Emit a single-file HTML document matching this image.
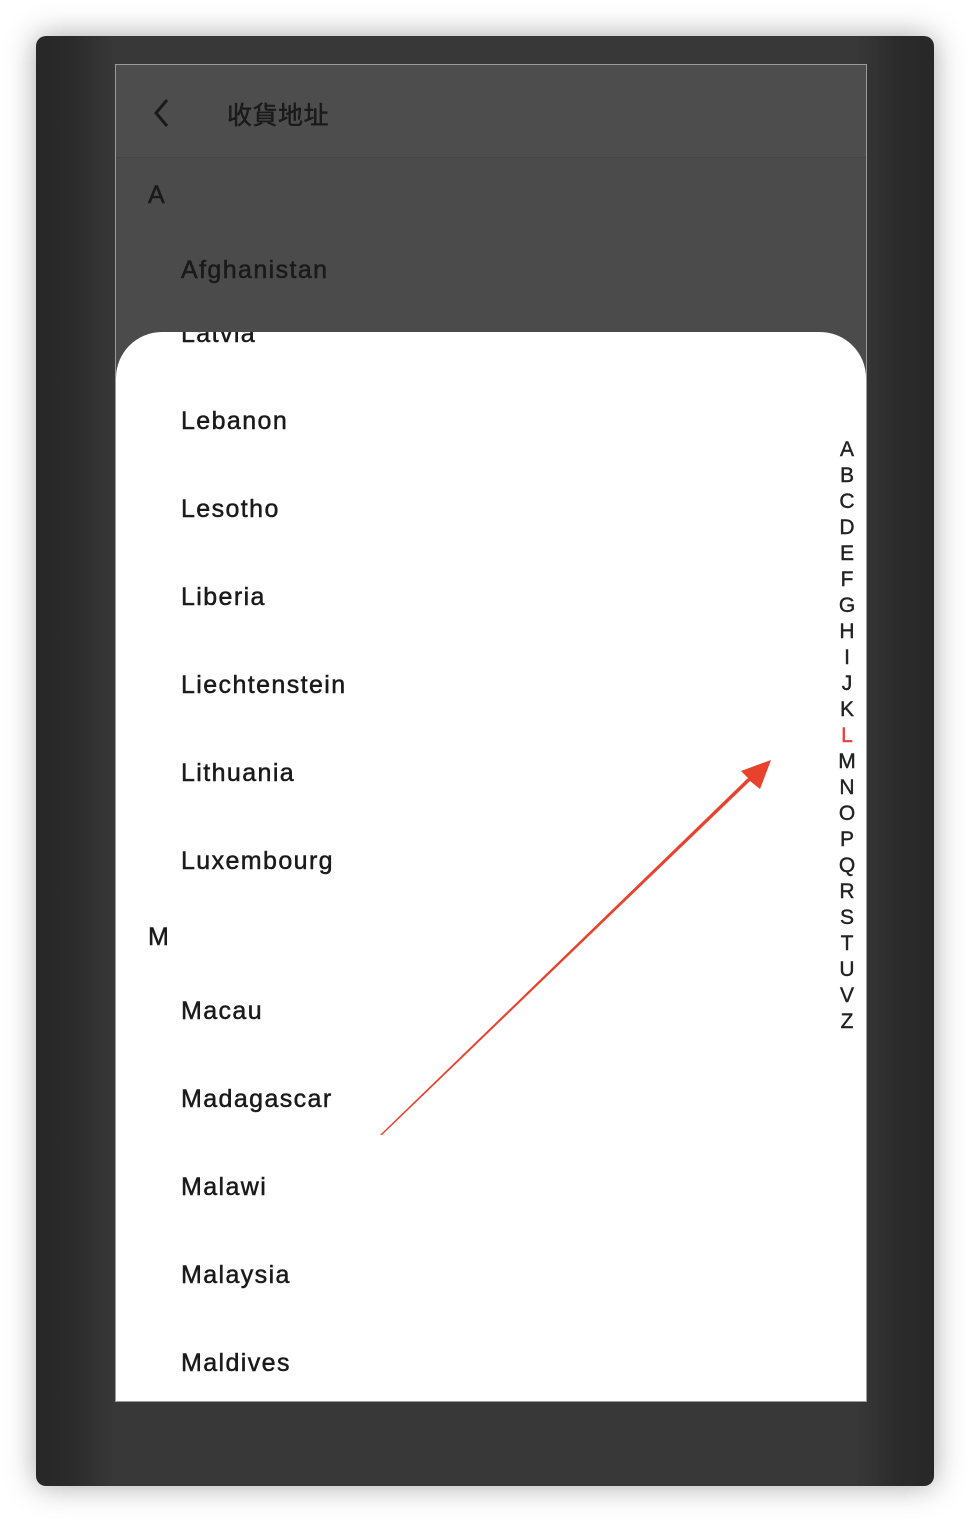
<!DOCTYPE html>
<html><head><meta charset="utf-8"><style>
body{margin:0;width:970px;height:1522px;background:#fff;position:relative;overflow:hidden;font-family:"Liberation Sans","Noto Sans CJK TC",sans-serif}
.win{position:absolute;left:36px;top:36px;width:898px;height:1450px;border-radius:10px;background:linear-gradient(90deg,#272727 0%,#2b2b2b 4%,#383838 8.8%,#383838 91.2%,#2b2b2b 96%,#272727 100%);box-shadow:0 0 30px rgba(0,0,0,.35)}
.scr{position:absolute;left:115px;top:64px;width:750px;height:1336px;border:1px solid #9a9a9a;background:#4b4b4b;overflow:hidden}
.hdr{position:absolute;left:0;top:0;width:750px;height:92px;background:#4d4d4d;border-bottom:1px solid #454545}
.t{position:absolute;color:#1a1a1a;font-size:25px;white-space:nowrap;letter-spacing:1.4px;-webkit-text-stroke:0.5px #1a1a1a}
.sheet{position:absolute;left:0;top:267px;width:750px;height:1100px;background:#fff;border-radius:46px 46px 0 0;overflow:hidden}
.idx{position:absolute;left:720px;top:105px;width:22px;text-align:center;font-size:21px;line-height:26px;color:#222;-webkit-text-stroke:0.4px #222}
</style></head><body>
<div class="win"></div>
<div class="scr">
 <div class="hdr">
  <svg style="position:absolute;left:36px;top:32px" width="20" height="32"><path d="M15 3 L4 16 L15 29" fill="none" stroke="#1a1a1a" stroke-width="3"/></svg>
  <div class="t" style="left:111px;top:31px;font-size:25px;letter-spacing:0.5px">收貨地址</div>
 </div>
 <div class="t" style="left:32px;top:116px">A</div>
 <div class="t" style="left:65px;top:191px">Afghanistan</div>
 <div class="sheet">
  <div class="t" style="left:65px;top:-12px">Latvia</div>
  <div class="t" style="left:65px;top:75px">Lebanon</div>
  <div class="t" style="left:65px;top:163px">Lesotho</div>
  <div class="t" style="left:65px;top:251px">Liberia</div>
  <div class="t" style="left:65px;top:339px">Liechtenstein</div>
  <div class="t" style="left:65px;top:427px">Lithuania</div>
  <div class="t" style="left:65px;top:515px">Luxembourg</div>
  <div class="t" style="left:32px;top:591px">M</div>
  <div class="t" style="left:65px;top:665px">Macau</div>
  <div class="t" style="left:65px;top:753px">Madagascar</div>
  <div class="t" style="left:65px;top:841px">Malawi</div>
  <div class="t" style="left:65px;top:929px">Malaysia</div>
  <div class="t" style="left:65px;top:1017px">Maldives</div>
  <div class="idx">A<br>B<br>C<br>D<br>E<br>F<br>G<br>H<br>I<br>J<br>K<br><span style="color:#e8413b;-webkit-text-stroke:0.4px #e8413b">L</span><br>M<br>N<br>O<br>P<br>Q<br>R<br>S<br>T<br>U<br>V<br>Z</div>
 </div>
</div>
<svg style="position:absolute;left:0;top:0" width="970" height="1522"><path d="M380 1135 L382 1135 L750 781 L760 789 L771 760 L741 771 L748 778 Z" fill="#e8412c"/></svg>
</body></html>
